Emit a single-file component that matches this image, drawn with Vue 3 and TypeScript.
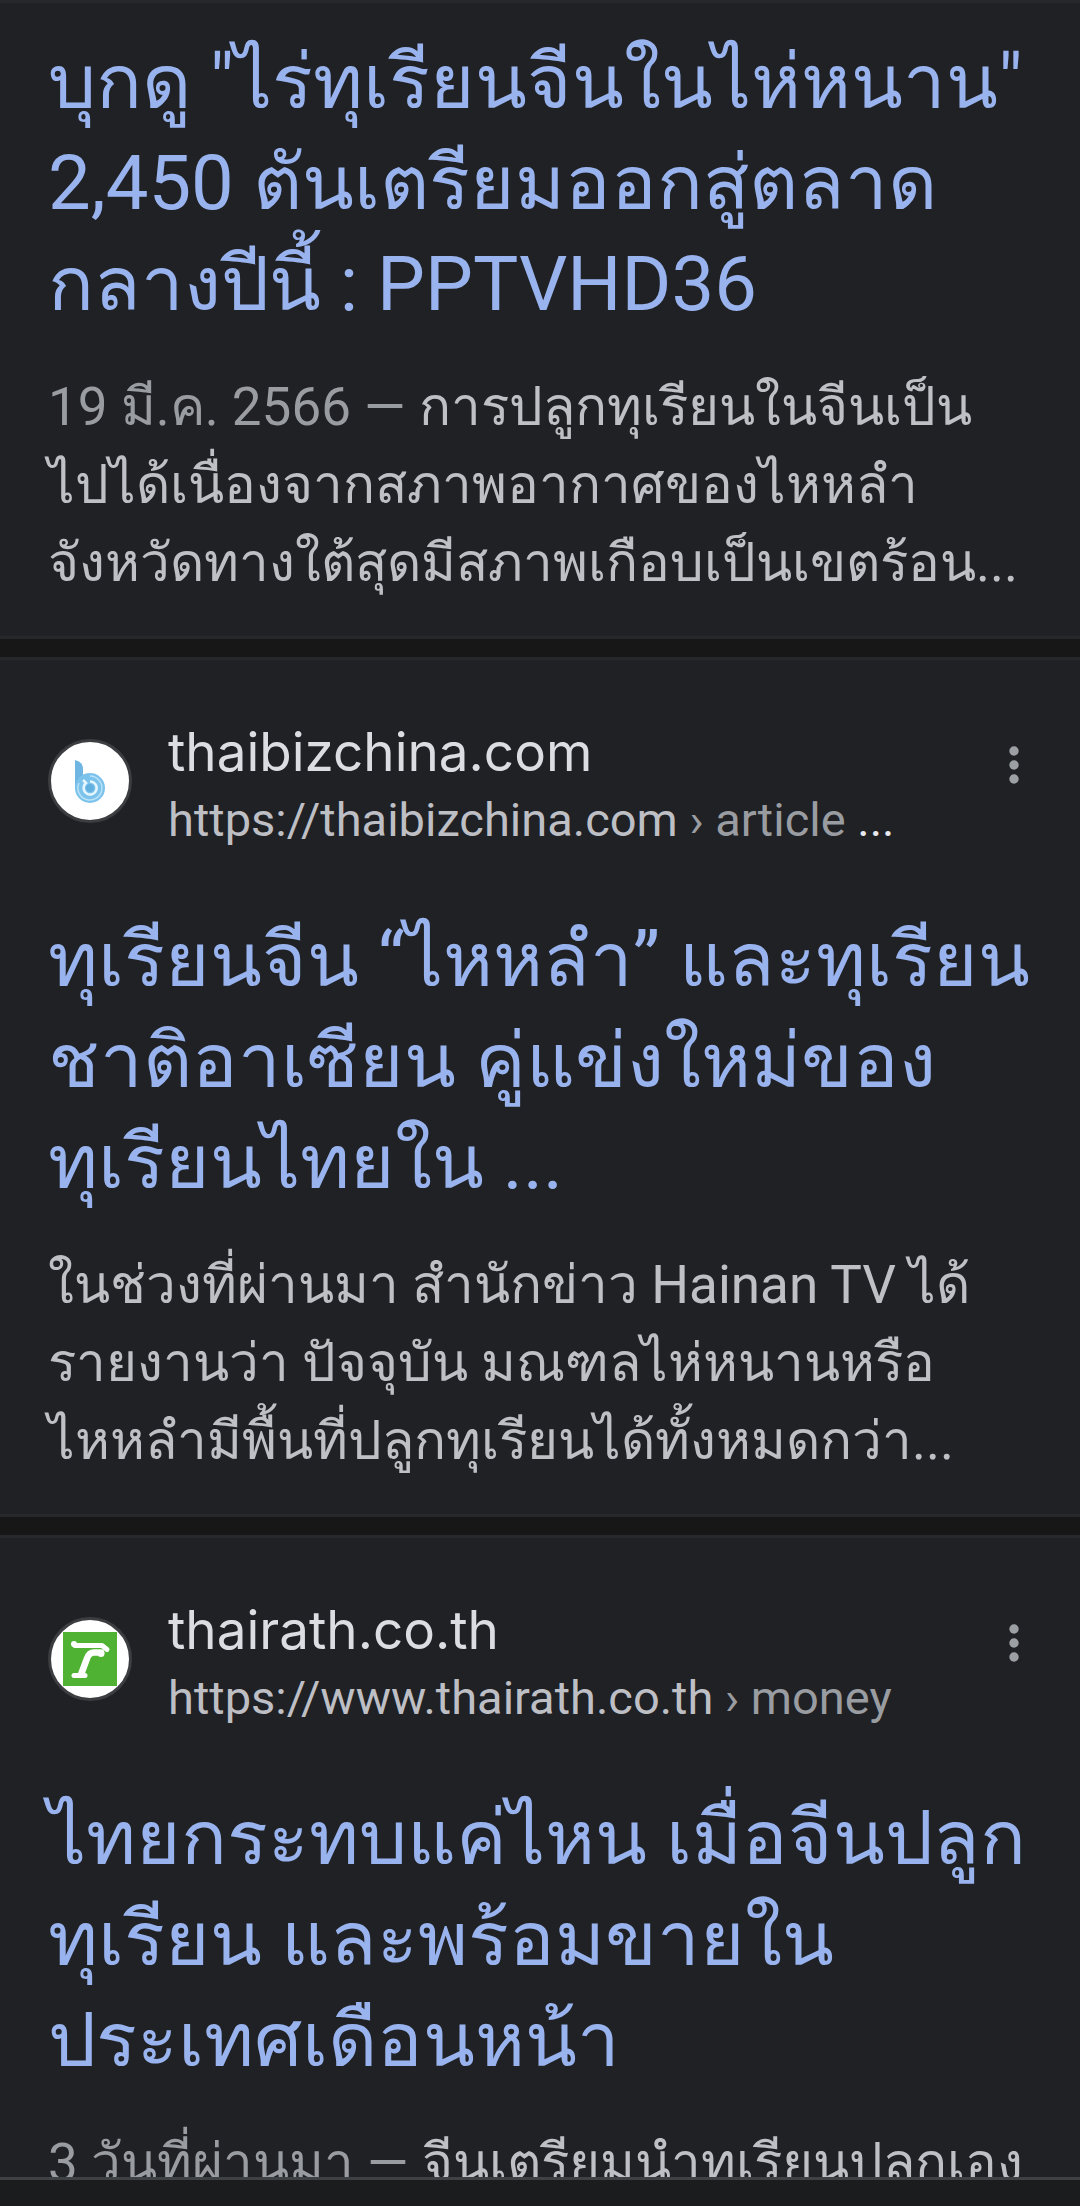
<script setup lang="ts">
interface SearchResult {
  id: string
  site?: string
  url?: string
  crumb?: string
  truncated?: boolean
  title: string[]
  date?: string
  snippet: string[]
}

const results: SearchResult[] = [
  {
    id: 'pptv',
    title: ['บุกดู "ไร่ทุเรียนจีนในไห่หนาน"', '2,450 ตันเตรียมออกสู่ตลาด', 'กลางปีนี้ : PPTVHD36'],
    date: '19 มี.ค. 2566',
    snippet: ['การปลูกทุเรียนในจีนเป็น', 'ไปได้เนื่องจากสภาพอากาศของไหหลำ', 'จังหวัดทางใต้สุดมีสภาพเกือบเป็นเขตร้อน...'],
  },
  {
    id: 'thaibiz',
    site: 'thaibizchina.com',
    url: 'https://thaibizchina.com',
    crumb: 'article',
    truncated: true,
    title: ['ทุเรียนจีน “ไหหลำ” และทุเรียน', 'ชาติอาเซียน คู่แข่งใหม่ของ', 'ทุเรียนไทยใน ...'],
    snippet: ['ในช่วงที่ผ่านมา สำนักข่าว Hainan TV ได้', 'รายงานว่า ปัจจุบัน มณฑลไห่หนานหรือ', 'ไหหลำมีพื้นที่ปลูกทุเรียนได้ทั้งหมดกว่า...'],
  },
  {
    id: 'thairath',
    site: 'thairath.co.th',
    url: 'https://www.thairath.co.th',
    crumb: 'money',
    title: ['ไทยกระทบแค่ไหน เมื่อจีนปลูก', 'ทุเรียน และพร้อมขายใน', 'ประเทศเดือนหน้า'],
    date: '3 วันที่ผ่านมา',
    snippet: ['จีนเตรียมนำทุเรียนปลูกเอง'],
  },
]
</script>

<template>
  <div class="screen">
    <main class="feed">
      <article v-for="r in results" :key="r.id" class="card">
        <header v-if="r.site" class="source">
          <span class="favicon">
            <svg v-if="r.id === 'thaibiz'" viewBox="0 0 78 78" aria-hidden="true">
              <path d="M24 18q8 2 8 9v19h-8z" fill="#6fb6e2" />
              <circle cx="39" cy="46" r="15" fill="#7cc3ec" />
              <path d="M28 41a12 12 0 1 0 11-7" fill="none" stroke="#b9e2f8" stroke-width="1.5" />
              <path d="M32 38l3 3a6.500 6.500 0 1 0 4-1.500" fill="none" stroke="#e6f6fe" stroke-width="2.500" />
              <circle cx="39" cy="46" r="4" fill="#62b0e0" />
            </svg>
            <svg v-else viewBox="0 0 78 78" aria-hidden="true">
              <rect x="12" y="12" width="54" height="54" fill="#4fb233" />
              <g fill="none" stroke="#fff" stroke-linecap="round" stroke-linejoin="round">
                <path d="M24 25.500h27l5 4" stroke-width="5" />
                <path d="M50 32.500h-7q-5 0-7 6l-6 16" stroke-width="6.500" />
                <path d="M23 55.500h11" stroke-width="5" />
              </g>
              <circle cx="23" cy="24" r="3" fill="#fff" />
              <circle cx="50" cy="33.500" r="3.500" fill="#fff" />
            </svg>
          </span>
          <div class="names">
            <span class="site">{{ r.site }}</span>
            <cite class="url">{{ r.url }}<span class="crumb"> › {{ r.crumb }}</span><span v-if="r.truncated" class="more"> ...</span></cite>
          </div>
          <button class="menu" type="button" :aria-label="'เพิ่มเติม ' + r.site">
            <svg viewBox="0 0 10 38" aria-hidden="true">
              <circle cx="5" cy="5" r="4.700" />
              <circle cx="5" cy="19" r="4.700" />
              <circle cx="5" cy="33" r="4.700" />
            </svg>
          </button>
        </header>
        <h3 class="title">
          <a href="#"><span v-for="line in r.title" :key="line" class="line">{{ line }}</span></a>
        </h3>
        <p class="snippet">
          <span v-for="(line, i) in r.snippet" :key="line" class="line"><span v-if="i === 0 && r.date" class="date">{{ r.date }} — </span>{{ line }}</span>
        </p>
      </article>
    </main>
    <footer class="bar"></footer>
  </div>
</template>

<style>
body {
  margin: 0;
  background: #171717;
}
</style>

<style scoped>
.screen {
  display: flex;
  flex-direction: column;
  height: 100vh;
  overflow: hidden;
  background: #171717;
  font-family: Roboto, "Noto Sans", sans-serif;
}

.feed {
  flex: 1;
  min-height: 0;
  overflow: hidden;
  display: flex;
  flex-direction: column;
  gap: 18px;
}

.card {
  flex: none;
  box-sizing: border-box;
  padding: 57px 48px 34px;
  border-top: 3px solid #27282b;
  border-bottom: 3px solid #27282b;
  background: #202124;
}

.card:first-child {
  padding-top: 29px;
}

.source {
  display: flex;
  align-items: flex-start;
  margin-bottom: 57px;
}

.favicon {
  flex: none;
  box-sizing: border-box;
  width: 84px;
  height: 84px;
  margin-top: 22px;
  border: 3px solid #3c3d41;
  border-radius: 50%;
  background: #fff;
  overflow: hidden;
}

.favicon svg {
  display: block;
  width: 78px;
  height: 78px;
}

.names {
  flex: 1;
  min-width: 0;
  margin-left: 36px;
  display: flex;
  flex-direction: column;
  white-space: nowrap;
}

.site {
  font-family: Inter, sans-serif;
  font-size: 53px;
  line-height: 70px;
  color: #dcdde2;
}

.url {
  font-size: 47px;
  line-height: 66px;
  font-style: normal;
  color: #bdbfc5;
}

.crumb {
  color: #999ca1;
}

.more {
  color: #e8e9ed;
}

.menu {
  flex: none;
  display: flex;
  justify-content: center;
  width: 36px;
  margin-top: 29px;
  padding: 0;
  border: 0;
  background: none;
}

.menu svg {
  width: 10px;
  height: 38px;
  fill: #9c9fa4;
}

.title {
  margin: 0 0 33px;
  font-family: Roboto, "Noto Sans", sans-serif;
  font-size: 76px;
  line-height: 101px;
  font-weight: 400;
}

.title a {
  color: #99b3ee;
  text-decoration: none;
}

.line {
  display: block;
  white-space: nowrap;
}

.snippet {
  margin: 0;
  font-size: 53px;
  line-height: 78px;
  color: #bfc0c5;
}

.date {
  color: #999ca1;
}

.bar {
  flex: none;
  box-sizing: border-box;
  height: 29px;
  border-top: 3px solid #3f4245;
  background: #1b1c1e;
}
</style>
